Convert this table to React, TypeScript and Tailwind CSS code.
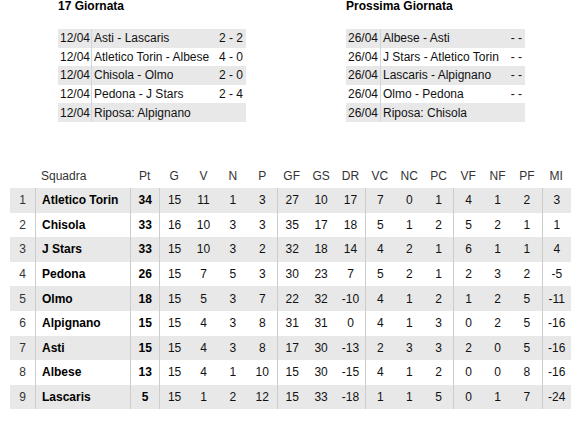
import React from 'react';

type Match = { date: string; teams: string; score: string };

const lastRound: Match[] = [
  { date: '12/04', teams: 'Asti - Lascaris', score: '2 - 2' },
  { date: '12/04', teams: 'Atletico Torin - Albese', score: '4 - 0' },
  { date: '12/04', teams: 'Chisola - Olmo', score: '2 - 0' },
  { date: '12/04', teams: 'Pedona - J Stars', score: '2 - 4' },
  { date: '12/04', teams: 'Riposa: Alpignano', score: '' },
];

const nextRound: Match[] = [
  { date: '26/04', teams: 'Albese - Asti', score: '- -' },
  { date: '26/04', teams: 'J Stars - Atletico Torin', score: '- -' },
  { date: '26/04', teams: 'Lascaris - Alpignano', score: '- -' },
  { date: '26/04', teams: 'Olmo - Pedona', score: '- -' },
  { date: '26/04', teams: 'Riposa: Chisola', score: '' },
];

const headers = ['Pt', 'G', 'V', 'N', 'P', 'GF', 'GS', 'DR', 'VC', 'NC', 'PC', 'VF', 'NF', 'PF', 'MI'];

// columns that open a new group get a divider on their left
const groupStart = [0, 1, 5, 8, 11, 14];

const standings: [number, string, number[]][] = [
  [1, 'Atletico Torin', [34, 15, 11, 1, 3, 27, 10, 17, 7, 0, 1, 4, 1, 2, 3]],
  [2, 'Chisola', [33, 16, 10, 3, 3, 35, 17, 18, 5, 1, 2, 5, 2, 1, 1]],
  [3, 'J Stars', [33, 15, 10, 3, 2, 32, 18, 14, 4, 2, 1, 6, 1, 1, 4]],
  [4, 'Pedona', [26, 15, 7, 5, 3, 30, 23, 7, 5, 2, 1, 2, 3, 2, -5]],
  [5, 'Olmo', [18, 15, 5, 3, 7, 22, 32, -10, 4, 1, 2, 1, 2, 5, -11]],
  [6, 'Alpignano', [15, 15, 4, 3, 8, 31, 31, 0, 4, 1, 3, 0, 2, 5, -16]],
  [7, 'Asti', [15, 15, 4, 3, 8, 17, 30, -13, 2, 3, 3, 2, 0, 5, -16]],
  [8, 'Albese', [13, 15, 4, 1, 10, 15, 30, -15, 4, 1, 2, 0, 0, 8, -16]],
  [9, 'Lascaris', [5, 15, 1, 2, 12, 15, 33, -18, 1, 1, 5, 0, 1, 7, -24]],
];

function RoundTable({ title, matches, width, dateWidth }: { title: string; matches: Match[]; width: string; dateWidth: string }) {
  return (
    <div className={width}>
      <h2 className="font-bold text-[12px] leading-[12px] h-[12px] text-black">{title}</h2>
      <div className="mt-[17px]">
        {matches.map((m, i) => (
          <div key={i} className={`flex items-center h-[18.6px] ${i % 2 === 0 ? 'bg-[#e8e8e8]' : 'bg-white'}`}>
            <div className={`${dateWidth} h-full flex items-center pl-[2px] border-r border-[#cfd6de]`}>{m.date}</div>
            <div className="flex-1 pl-[2px] whitespace-nowrap">{m.teams}</div>
            <div className="pr-[3px] whitespace-pre">{m.score}</div>
          </div>
        ))}
      </div>
    </div>
  );
}

export default function App() {
  return (
    <div className="w-[578px] h-[422px] bg-white overflow-hidden text-[12px] text-[#111] font-['Liberation_Sans',Arial,sans-serif]">
      {/* Rounds */}
      <div className="flex">
        <div className="ml-[58px]">
          <RoundTable title="17 Giornata" matches={lastRound} width="w-[188px]" dateWidth="w-[34px]" />
        </div>
        <div className="ml-[100px]">
          <RoundTable title="Prossima Giornata" matches={nextRound} width="w-[179px]" dateWidth="w-[35px]" />
        </div>
      </div>

      {/* Standings */}
      <div className="ml-[10px] mt-[41.4px] w-[561px]">
        <div className="grid grid-cols-[25px_95px_repeat(15,1fr)] h-[24.6px] items-center text-[#333]">
          <div />
          <div className="pl-[6px]">Squadra</div>
          {headers.map((h) => (
            <div key={h} className="text-center">{h}</div>
          ))}
        </div>
        {standings.map(([pos, team, vals], r) => (
          <div
            key={pos}
            className={`grid grid-cols-[25px_95px_repeat(15,1fr)] h-[24.6px] ${r % 2 === 0 ? 'bg-[#e8e8e8]' : 'bg-white'}`}
          >
            <div className="flex items-center justify-center text-[#333]">{pos}</div>
            <div className="flex items-center pl-[6px] font-bold text-black border-l border-[#cccccc] whitespace-nowrap">{team}</div>
            {vals.map((v, c) => (
              <div
                key={c}
                className={`flex items-center justify-center ${c === 0 ? 'font-bold text-black' : ''} ${groupStart.includes(c) ? 'border-l border-[#cccccc]' : ''}`}
              >
                {v}
              </div>
            ))}
          </div>
        ))}
      </div>
    </div>
  );
}
